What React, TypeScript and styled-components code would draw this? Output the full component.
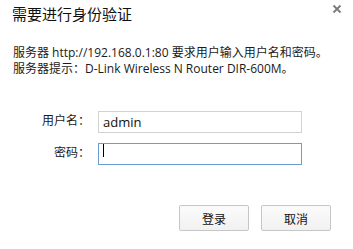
import React from "react";
import styled, { createGlobalStyle } from "styled-components";

const Global = createGlobalStyle`
  html, body { margin: 0; padding: 0; background: #ffffff; }
  body {
    font-family: "Noto Sans CJK SC", "Noto Sans", sans-serif;
    color: #1a1a1a;
  }
`;

const Dialog = styled.div`
  width: 353px;
  height: 249px;
  display: flex;
  flex-direction: column;
  background: #ffffff;
`;

const TitleBar = styled.div`
  height: 30px;
  display: flex;
  justify-content: space-between;
  align-items: flex-start;
  padding-left: 12px;
  box-sizing: border-box;
`;

const Title = styled.div`
  font-size: 15px;
  line-height: 20px;
  padding-top: 4px;
  color: #111;
`;

const Close = styled.button`
  width: 20px;
  height: 17px;
  margin: 0 6px 0 0;
  padding: 0;
  border: none;
  background: transparent;
  display: flex;
  align-items: center;
  justify-content: center;
`;

const Message = styled.div`
  padding: 15px 0 0 13px;
  font-family: "Open Sans", "Noto Sans CJK SC", sans-serif;
  font-size: 12px;
  line-height: 16px;
  color: #1a1a1a;
`;

const Form = styled.div`
  margin-top: 31px;
  display: grid;
  grid-template-columns: 90px 204px;
  column-gap: 8px;
  row-gap: 10px;
  align-items: center;
`;

const Label = styled.label`
  font-size: 12px;
  text-align: right;
  color: #1a1a1a;
`;

const Field = styled.div`
  position: relative;
  height: 22px;
`;

const Input = styled.input<{ $focused?: boolean }>`
  box-sizing: border-box;
  width: 204px;
  height: 22px;
  margin: 0;
  padding: 0 4px;
  border: 1px solid ${(p) => (p.$focused ? "#6f9bd3" : "#d2d2d2")};
  outline: none;
  background: #fff;
  font-family: "Segoe UI", "Open Sans", "Noto Sans", sans-serif;
  font-size: 13px;
  color: #111;
`;

const Caret = styled.span`
  position: absolute;
  left: 5px;
  top: 4px;
  width: 1px;
  height: 13px;
  background: #000;
`;

const Buttons = styled.div`
  margin-top: 43px;
  display: flex;
  justify-content: flex-end;
  gap: 12px;
  padding-right: 22px;
`;

const Button = styled.button`
  width: 70px;
  height: 26px;
  box-sizing: border-box;
  border: 1px solid #c6c6c6;
  border-radius: 2px;
  background: linear-gradient(#fbfbfb, #f1f1f1);
  font-family: "Noto Sans CJK SC", sans-serif;
  font-size: 12px;
  color: #111;
  padding: 0;
`;

export default function App() {
  return (
    <>
      <Global />
      <Dialog>
        <TitleBar>
          <Title>需要进行身份验证</Title>
          <Close aria-label="close">
            <svg width="10" height="10" viewBox="0 0 10 10">
              <path d="M1.5 1.5 L8.5 8.5 M8.5 1.5 L1.5 8.5" stroke="#7a7a7a" strokeWidth="1.8" />
            </svg>
          </Close>
        </TitleBar>
        <Message>
          服务器 http://192.168.0.1:80 要求用户输入用户名和密码。
          <br />
          服务器提示：D-Link Wireless N Router DIR-600M。
        </Message>
        <Form>
          <Label>用户名：</Label>
          <Field>
            <Input defaultValue="admin" />
          </Field>
          <Label>密码：</Label>
          <Field>
            <Input type="password" $focused />
            <Caret />
          </Field>
        </Form>
        <Buttons>
          <Button>登录</Button>
          <Button>取消</Button>
        </Buttons>
      </Dialog>
    </>
  );
}
